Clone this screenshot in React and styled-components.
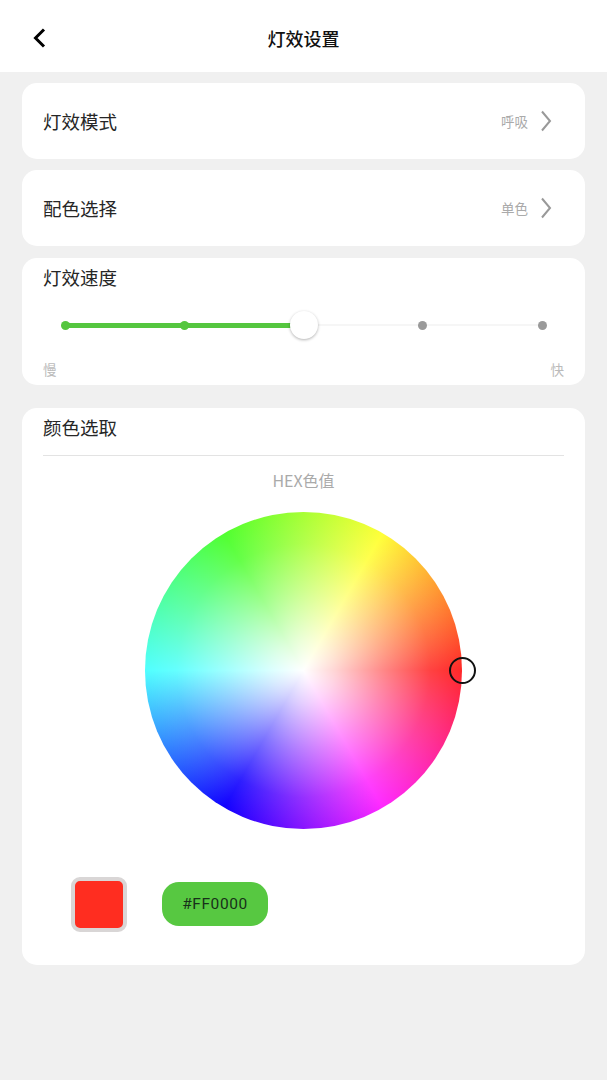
import React from "react";
import styled, { createGlobalStyle } from "styled-components";

const Global = createGlobalStyle`
  html, body { margin: 0; padding: 0; background: #f0f0f0; }
  * { box-sizing: border-box; }
  body { font-family: "Noto Sans CJK SC", "Noto Sans", sans-serif; }
`;
const Page = styled.div`
  width: 607px; height: 1080px; background: #f0f0f0; display: flex; flex-direction: column;
`;
const Header = styled.header`
  height: 72px; background: #fff; display: flex; align-items: center; justify-content: center;
  position: relative; padding-top: 6px;
`;
const Back = styled.svg`
  position: absolute; left: 30px; top: 26px; width: 18px; height: 24px;
`;
const Title = styled.h1`
  margin: 0 0 3px; font-size: 18px; font-weight: 500; color: #111; line-height: 24px;
`;
const Content = styled.main`
  display: flex; flex-direction: column; padding: 11px 22px 0;
`;
const Card = styled.section`
  background: #fff; border-radius: 15px; margin-bottom: ${(p) => p.$mb || 11}px;
`;
const RowCard = styled(Card)`
  height: 76px; display: flex; align-items: center; justify-content: space-between; padding: 0 33px 0 21px;
`;
const Label = styled.div`
  font-size: 18.5px; color: #262626; line-height: 26px;
`;
const RowRight = styled.div`
  display: flex; align-items: center; gap: 12px;
`;
const Value = styled.span`
  font-size: 13.5px; color: #aaa; line-height: 20px;
`;
const Chevron = styled.svg`
  width: 12px; height: 22px;
`;
const SpeedCard = styled(Card)`
  height: 127px; padding: 6px 21px 0; margin-bottom: 23px;
`;
const Slider = styled.div`
  position: relative; margin: 21px 22px 0; height: 28px; display: flex; align-items: center; justify-content: space-between;
`;
const Track = styled.div`
  position: absolute; left: 0; right: 0; top: 13px; height: 2px; background: #f6f6f6;
`;
const Fill = styled.div`
  position: absolute; left: 0; top: 11.5px; height: 5px; background: #55c63f;
`;
const Stop = styled.span`
  position: relative; width: 0; height: 28px; display: flex; align-items: center; justify-content: center;
`;
const Dot = styled.span`
  flex: none; width: 9px; height: 9px; border-radius: 50%; background: ${(p) => (p.$on ? "#55c63f" : "#9a9a9a")};
`;
const Thumb = styled.span`
  flex: none; width: 28px; height: 28px; border-radius: 50%; background: #fff;
  box-shadow: 0 1px 3px rgba(0,0,0,.3);
`;
const Ends = styled.div`
  display: flex; justify-content: space-between; font-size: 13.5px; color: #bbb; line-height: 20px; margin-top: 20px;
`;
const PickCard = styled(Card)`
  height: 557px; padding: 6px 21px 0; margin: 0;
`;
const PickHead = styled.div`
  height: 42px; border-bottom: 1px solid #e3e3e3;
`;
const Hex = styled.div`
  text-align: center; font-size: 16px; color: #aaa; line-height: 24px; margin-top: 12px;
`;
const WheelWrap = styled.div`
  display: flex; justify-content: center; margin-top: 20px;
`;
const Wheel = styled.div`
  position: relative; width: 317px; height: 317px; border-radius: 50%;
  background:
    radial-gradient(circle closest-side, #fff 0%, rgba(255,255,255,.8) 20%, rgba(255,255,255,.45) 50%, rgba(255,255,255,.12) 80%, rgba(255,255,255,0) 100%),
    conic-gradient(from 90deg, #ff2828, #ff28ff 60deg, #1000ff 120deg, #50ffff 180deg, #50ff30 240deg, #ffff38 300deg, #ff2828 360deg);
`;
const Marker = styled.span`
  position: absolute; left: 304px; top: 145px; width: 27px; height: 27px; border-radius: 50%; border: 2px solid #111;
`;
const Bottom = styled.div`
  display: flex; align-items: center; gap: 35px; margin: 48px 0 0 28px;
`;
const Swatch = styled.div`
  width: 56px; height: 55px; border-radius: 9px; border: 4px solid #d9d6d6; background: #ff2d20;
`;
const HexPill = styled.div`
  width: 106px; height: 44px; margin-bottom: 1px; border-radius: 17px; background: #57c841; display: flex; align-items: center; justify-content: center;
  font-family: Roboto, sans-serif; font-size: 15.5px; letter-spacing: 0.6px; color: #17301a;
`;

const Arrow = () => (
  <Chevron viewBox="0 0 12 22"><path d="M2 1.5 L10 11 L2 20.5" fill="none" stroke="#999" strokeWidth="2" /></Chevron>
);

export default function App() {
  return (
    <Page>
      <Global />
      <Header>
        <Back viewBox="0 0 18 24"><path d="M14 3.5 L5.5 12 L14 20.5" fill="none" stroke="#000" strokeWidth="3" /></Back>
        <Title>灯效设置</Title>
      </Header>
      <Content>
        <RowCard>
          <Label>灯效模式</Label>
          <RowRight><Value>呼吸</Value><Arrow /></RowRight>
        </RowCard>
        <RowCard $mb={12}>
          <Label>配色选择</Label>
          <RowRight><Value>单色</Value><Arrow /></RowRight>
        </RowCard>
        <SpeedCard>
          <Label>灯效速度</Label>
          <Slider>
            <Track />
            <Fill style={{ width: "50%" }} />
            <Stop><Dot $on /></Stop>
            <Stop><Dot $on /></Stop>
            <Stop><Thumb /></Stop>
            <Stop><Dot /></Stop>
            <Stop><Dot /></Stop>
          </Slider>
          <Ends><span>慢</span><span>快</span></Ends>
        </SpeedCard>
        <PickCard>
          <PickHead><Label>颜色选取</Label></PickHead>
          <Hex>HEX色值</Hex>
          <WheelWrap>
            <Wheel><Marker /></Wheel>
          </WheelWrap>
          <Bottom>
            <Swatch />
            <HexPill>#FF0000</HexPill>
          </Bottom>
        </PickCard>
      </Content>
    </Page>
  );
}
